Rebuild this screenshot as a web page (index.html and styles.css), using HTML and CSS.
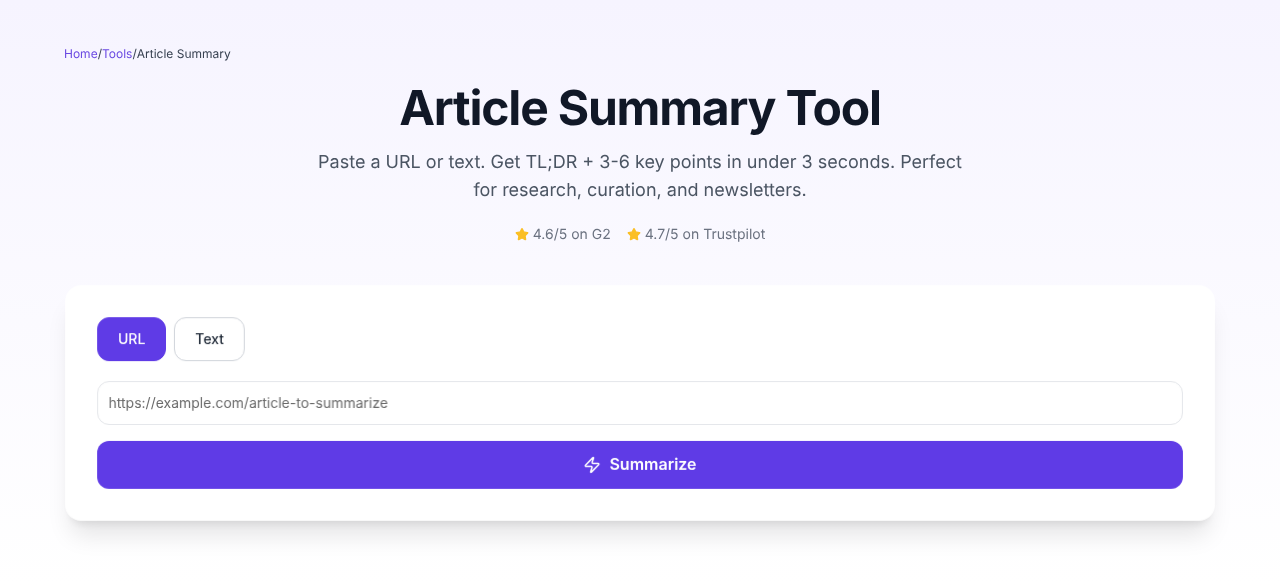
FILE: index.html
```html
<!DOCTYPE html>
<html lang="en">
<head>
    <meta charset="UTF-8">
    <title>Article Summary Tool</title>
    <link rel="stylesheet" href="styles.css">
</head>
<body>
<div class="page">
    <nav class="crumbs">
        <a href="#">Home</a><span class="sep">/</span><a href="#">Tools</a><span class="sep">/</span><span>Article Summary</span>
    </nav>
    <header class="hero">
        <h1>Article Summary Tool</h1>
        <p class="lead">Paste a URL or text. Get TL;DR + 3-6 key points in under 3 seconds. Perfect for research, curation, and newsletters.</p>
        <div class="ratings">
            <span class="rating">
                <svg class="star" viewBox="0 0 24 24"><path d="M11.525 2.295a.53.53 0 0 1 .95 0l2.31 4.679a2.123 2.123 0 0 0 1.595 1.16l5.166.756a.53.53 0 0 1 .294.904l-3.736 3.638a2.123 2.123 0 0 0-.611 1.878l.882 5.14a.53.53 0 0 1-.771.56l-4.618-2.428a2.122 2.122 0 0 0-1.973 0L6.396 21.01a.53.53 0 0 1-.77-.56l.881-5.139a2.122 2.122 0 0 0-.611-1.879L2.16 9.795a.53.53 0 0 1 .294-.906l5.165-.755a2.122 2.122 0 0 0 1.597-1.16z"/></svg>
                4.6/5 on G2
            </span>
            <span class="rating">
                <svg class="star" viewBox="0 0 24 24"><path d="M11.525 2.295a.53.53 0 0 1 .95 0l2.31 4.679a2.123 2.123 0 0 0 1.595 1.16l5.166.756a.53.53 0 0 1 .294.904l-3.736 3.638a2.123 2.123 0 0 0-.611 1.878l.882 5.14a.53.53 0 0 1-.771.56l-4.618-2.428a2.122 2.122 0 0 0-1.973 0L6.396 21.01a.53.53 0 0 1-.77-.56l.881-5.139a2.122 2.122 0 0 0-.611-1.879L2.16 9.795a.53.53 0 0 1 .294-.906l5.165-.755a2.122 2.122 0 0 0 1.597-1.16z"/></svg>
                4.7/5 on Trustpilot
            </span>
        </div>
    </header>
    <section class="card">
        <div class="tabs">
            <button class="tab active">URL</button>
            <button class="tab">Text</button>
        </div>
        <input class="url-input" type="text" placeholder="https://example.com/article-to-summarize">
        <button class="submit">
            <svg class="bolt" viewBox="0 0 24 24"><path d="M4 14a1 1 0 0 1-.78-1.63l9.9-10.2a.5.5 0 0 1 .86.46l-1.92 6.02A1 1 0 0 0 13 10h7a1 1 0 0 1 .78 1.63l-9.9 10.2a.5.5 0 0 1-.86-.46l1.92-6.02A1 1 0 0 0 11 14z"/></svg>
            Summarize
        </button>
    </section>
</div>
</body>
</html>
```

FILE: styles.css
```css
* {
    box-sizing: border-box;
}

body {
    margin: 0;
    height: 586px;
    overflow: hidden;
    font-family: Inter, "Liberation Sans", sans-serif;
    text-rendering: geometricPrecision;
    background: linear-gradient(180deg, #f6f4ff 0%, #ffffff 100%);
}

.page {
    max-width: 1152px;
    margin: 0 auto;
    padding-top: 46px;
}

.crumbs {
    display: flex;
    font-size: 12px;
    line-height: 16px;
    color: #374151;
    will-change: transform;
}

.crumbs a {
    color: #6a49e2;
    text-decoration: none;
}

.hero {
    text-align: center;
    margin-top: 16px;
    transform: translateY(0.4px);
    will-change: transform;
}

h1 {
    margin: 0;
    font-size: 48px;
    line-height: 60px;
    font-weight: 700;
    letter-spacing: -1.2px;
    color: #111827;
}

.lead {
    width: 672px;
    margin: 11px auto 0;
    font-size: 18px;
    line-height: 28px;
    color: #4b5563;
}

.ratings {
    display: flex;
    justify-content: center;
    gap: 16px;
    margin-top: 20px;
    font-size: 14px;
    line-height: 20px;
    color: #6b7280;
}

.rating {
    display: flex;
    align-items: center;
    gap: 4px;
}

.star {
    width: 14px;
    height: 14px;
    margin-top: -2px;
    fill: #fbbf24;
    stroke: #fbbf24;
    stroke-width: 2;
    stroke-linejoin: round;
}

.card {
    margin-top: 40px;
    padding: 32px;
    background: #fff;
    border-radius: 16px;
    box-shadow: 0 20px 25px -5px rgba(0, 0, 0, 0.1), 0 8px 10px -6px rgba(0, 0, 0, 0.1);
    transform: scale(0.998);
    will-change: transform;
}

.tabs {
    display: flex;
    gap: 8px;
}

.tab {
    height: 44px;
    padding: 0 20px 1px;
    font-family: inherit;
    font-size: 14px;
    font-weight: 500;
    color: #1f2937;
    background: #fff;
    border: 1px solid #d1d5db;
    border-radius: 12px;
}

.tab.active {
    color: #fff;
    background: #5f3be6;
    border-color: #5f3be6;
}

.url-input {
    display: block;
    width: 100%;
    height: 44px;
    margin-top: 20px;
    padding: 0 10.5px 1px;
    font-family: inherit;
    font-size: 14px;
    color: #111827;
    background: #fff;
    border: 1px solid #e5e7eb;
    border-radius: 12px;
    outline: none;
}

.url-input::placeholder {
    color: #6b6b6b;
}

.submit {
    display: flex;
    align-items: center;
    justify-content: center;
    gap: 8px;
    width: 100%;
    height: 48px;
    margin-top: 16px;
    padding-bottom: 3px;
    font-family: inherit;
    font-size: 16px;
    font-weight: 600;
    color: #fff;
    background: #5f3be6;
    border: 0;
    border-radius: 12px;
}

.bolt {
    width: 18px;
    height: 18px;
    margin-top: 2px;
    fill: none;
    stroke: #fff;
    stroke-width: 2;
    stroke-linecap: round;
    stroke-linejoin: round;
}
```
